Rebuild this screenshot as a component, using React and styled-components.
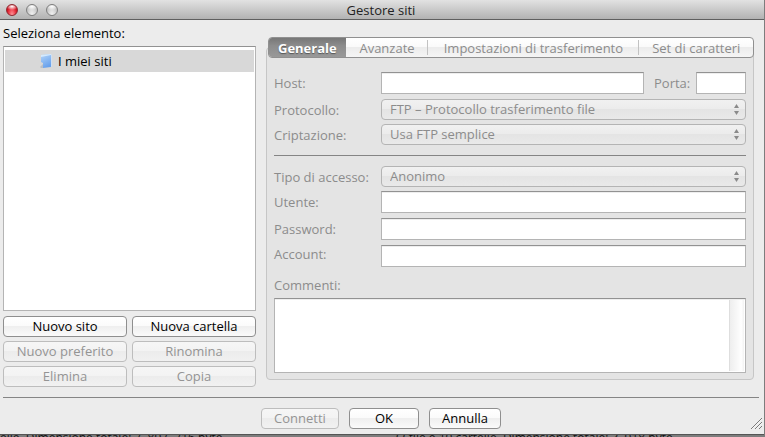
import React from 'react';
import styled, { createGlobalStyle } from 'styled-components';

const GlobalStyle = createGlobalStyle`
  * {
    box-sizing: border-box;
  }

  body {
    margin: 0;
    background: #7d7d7d;
  }

  body, button, input, select, textarea {
    font-family: "Open Sans", "Noto Sans", sans-serif;
    font-size: 13px;
    font-weight: 500;
    line-height: 18px;
  }
`;

const Desktop = styled.div`
  display: flex;
  flex-direction: column;
  height: 100vh;
  min-height: 400px;
  overflow: hidden;
`;

const Window = styled.div`
  display: flex;
  flex-direction: column;
  flex: 1;
  min-height: 0;
  margin-right: 1px;
  background: #ececec;
  border-bottom: 1px solid #555;
`;

const TitleBar = styled.header`
  display: grid;
  grid-template-columns: 1fr auto 1fr;
  align-items: center;
  height: 20px;
  padding: 0 8px 0 6px;
  background: linear-gradient(#e2e2e2, #b2b2b2);
  border-bottom: 1px solid #5f5f5f;
`;

const Title = styled.h1`
  margin: 0;
  font-size: 13px;
  font-weight: 500;
  line-height: 18px;
  color: #222;
`;

const Lights = styled.div`
  display: flex;
  gap: 8px;
`;

const Light = styled.button`
  width: 12px;
  height: 12px;
  padding: 0;
  border: 1px solid ${props => (props.$red ? '#8d2930' : '#7e7e7e')};
  border-radius: 50%;
  background: ${props => (props.$red
    ? 'radial-gradient(ellipse 60% 35% at 50% 15%, #fff, transparent), radial-gradient(ellipse at 50% 100%, #ff9a9e 0, #f04a55 40%, #d2101f 75%)'
    : 'radial-gradient(ellipse 60% 35% at 50% 15%, #fff, transparent), radial-gradient(ellipse at 50% 100%, #f2f2f2 0, #d8d8d8 45%, #c0c0c0 80%)')};
`;

const Main = styled.main`
  display: flex;
  flex: 1;
  gap: 10px;
  min-height: 0;
  padding: 0 10px 10px 3px;
`;

const Sidebar = styled.section`
  display: flex;
  flex-direction: column;
  flex: 0 0 253px;
  padding-top: 4px;
`;

const SidebarTitle = styled.h2`
  margin: 0 0 4px;
  font-size: 13px;
  font-weight: 500;
  line-height: 18px;
  color: #000;
`;

const SiteTree = styled.ul`
  flex: 1;
  min-height: 0;
  margin: 0 0 5px;
  padding: 3px 1px;
  list-style: none;
  background: #fff;
  border: 1px solid #b4b4b4;
  border-top-color: #929292;
`;

const SiteItem = styled.li`
  display: flex;
  align-items: center;
  gap: 5px;
  height: 22px;
  padding-left: 35px;
  color: #000;
  background: #d8d8d8;
`;

const ButtonGrid = styled.div`
  display: grid;
  grid-template-columns: 1fr 1fr;
  gap: 4px 5px;
`;

const Button = styled.button`
  height: 21px;
  width: ${props => props.$width || 'auto'};
  padding: 0 4px 2px;
  color: #000;
  background: linear-gradient(#fff 0, #fbfbfb 45%, #efefef 50%, #fafafa 100%);
  border: 1px solid #8f8f8f;
  border-radius: 4px;

  &:disabled {
    color: #949494;
    background: linear-gradient(#f6f6f6 0, #f3f3f3 45%, #ececec 50%, #f1f1f1 100%);
    border-color: #bdbdbd;
  }
`;

const Settings = styled.section`
  display: flex;
  flex-direction: column;
  flex: 1;
  min-width: 0;
  padding: 17px 0 7px;
`;

const TabBar = styled.div`
  position: relative;
  z-index: 1;
  display: flex;
  height: 21px;
  margin-left: 2px;
  overflow: hidden;
  background: linear-gradient(#fff 0, #fafafa 45%, #ececec 50%, #f5f5f5 100%);
  border: 1px solid #909090;
  border-radius: 4px;
`;

const Tab = styled.button`
  display: flex;
  align-items: center;
  justify-content: center;
  flex: ${props => props.$size} 1 0;
  padding: 0;
  border: 0;
  white-space: nowrap;
  color: ${props => (props.$active ? '#fff' : '#8c8c8c')};
  font-weight: ${props => (props.$active ? 'bold' : '500')};
  text-shadow: ${props => (props.$active ? '0 1px 1px #555' : 'none')};
  background: ${props => (props.$active ? 'linear-gradient(#777, #8c8c8c 40%, #999)' : 'transparent')};

  &:not(:first-child)::before {
    content: '';
    width: 1px;
    height: 15px;
    margin-right: auto;
    background: ${props => (props.$divided ? '#c2c2c2' : 'transparent')};
  }

  &:not(:first-child)::after {
    content: '';
    margin-left: auto;
  }
`;

const Panel = styled.form`
  display: flex;
  flex-direction: column;
  flex: 1;
  min-height: 0;
  margin-top: -11px;
  padding: 24px 7px 6px;
  background: #e4e4e4;
  border: 1px solid #c6c6c6;
  border-radius: 4px;
`;

const Row = styled.div`
  display: flex;
  align-items: ${props => props.$align || 'center'};
  margin-bottom: ${props => props.$gap || '5px'};
`;

const Label = styled.label`
  flex: 0 0 ${props => props.$width || '107px'};
  white-space: nowrap;
  color: #8c8c8c;
`;

const PortLabel = styled(Label)`
  padding-left: 10px;
`;

const TextInput = styled.input`
  flex: ${props => (props.$width ? `0 0 ${props.$width}` : '1')};
  min-width: 0;
  height: 22px;
  padding: 0 4px;
  background: #fff;
  border: 1px solid #b4b4b4;
  border-top-color: #929292;
  border-radius: 0;
  box-shadow: inset 0 1px 0 #eee;
`;

const SelectBox = styled.div`
  position: relative;
  display: flex;
  flex: 1;
  min-width: 0;
`;

const SelectInput = styled.select`
  width: 100%;
  height: 21px;
  padding: 0 20px 2px 8px;
  appearance: none;
  color: #8c8c8c;
  opacity: 1;
  background: linear-gradient(#f1f1f1 0, #ececec 45%, #e4e4e4 50%, #e9e9e9 100%);
  border: 1px solid #b4b4b4;
  border-radius: 4px;
`;

const Arrows = styled.svg`
  position: absolute;
  top: 5px;
  right: 7px;
  pointer-events: none;
`;

const Divider = styled.hr`
  width: 100%;
  height: 1px;
  margin: ${props => props.$margin || '0'};
  border: 0;
  background: #858585;
`;

const CommentBox = styled.div`
  display: flex;
  flex: 1;
  min-height: 40px;
  margin-top: 4px;
  background: #fff;
  border: 1px solid #b4b4b4;
  border-top-color: #929292;
  box-shadow: inset 0 1px 0 #eee;
`;

const CommentInput = styled.textarea`
  flex: 1;
  min-width: 0;
  padding: 2px 4px;
  border: 0;
  resize: none;
  background: transparent;
`;

const ScrollTrack = styled.div`
  width: 15px;
  margin: 1px;
  background: linear-gradient(to right, #eee, #fafafa 60%, #fff 80%, #f2f2f2);
  border-left: 1px solid #dedede;
`;

const SeparatorWrap = styled.div`
  padding: 0 5px 0 3px;
`;

const Footer = styled.footer`
  display: grid;
  grid-template-columns: 1fr auto 1fr;
  padding: 10px 2px 5px 0;
`;

const FooterButtons = styled.div`
  display: flex;
  grid-column: 2;
  gap: 10px;
`;

const Grip = styled.svg`
  justify-self: end;
  align-self: end;
`;

const Backdrop = styled.div`
  display: grid;
  grid-template-columns: 392px 1fr;
  height: 2px;
  overflow: hidden;
  font-size: 12px;
  line-height: 6px;
  white-space: nowrap;
  color: #111;
  background: #7d7d7d;
`;

const FolderIcon = () => (
  <svg width="13" height="16" viewBox="0 0 13 16" aria-hidden="true">
    <defs>
      <linearGradient id="folder" x1="0" y1="0" x2="0.4" y2="1">
        <stop offset="0" stopColor="#b4d5f9" />
        <stop offset="1" stopColor="#6aa2ec" />
      </linearGradient>
    </defs>
    <path d="M0 14l3-3v4H1z" fill="#b9bec6" />
    <path d="M1 2l10-1v13l-8 1v-5L1 9z" fill="url(#folder)" />
    <path d="M1 2l10-1v1L1 4z" fill="#d5eafd" />
    <path d="M11 1l1 1v11l-1 1z" fill="#cfdff2" />
  </svg>
);

const Select = ({ id, value }) => (
  <SelectBox>
    <SelectInput id={id} disabled defaultValue={value}>
      <option value={value}>{value}</option>
    </SelectInput>
    <Arrows width="5" height="11" viewBox="0 0 5 11" aria-hidden="true">
      <path d="M0 4L2.5 0L5 4zM0 7L2.5 11L5 7z" fill="#8a8a8a" />
    </Arrows>
  </SelectBox>
);

const tabs = [
  { name: 'Generale', size: 77 },
  { name: 'Avanzate', size: 82 },
  { name: 'Impostazioni di trasferimento', size: 212 },
  { name: 'Set di caratteri', size: 115 },
];

const siteActions = [
  { name: 'Nuovo sito', enabled: true },
  { name: 'Nuova cartella', enabled: true },
  { name: 'Nuovo preferito' },
  { name: 'Rinomina' },
  { name: 'Elimina' },
  { name: 'Copia' },
];

const App = () => (
  <Desktop>
    <GlobalStyle />
    <Window>
      <TitleBar>
        <Lights>
          <Light $red aria-label="Chiudi" />
          <Light aria-label="Riduci" />
          <Light aria-label="Ingrandisci" />
        </Lights>
        <Title>Gestore siti</Title>
      </TitleBar>
      <Main>
        <Sidebar>
          <SidebarTitle>Seleziona elemento:</SidebarTitle>
          <SiteTree>
            <SiteItem>
              <FolderIcon />
              I miei siti
            </SiteItem>
          </SiteTree>
          <ButtonGrid>
            {siteActions.map(action => (
              <Button key={action.name} disabled={!action.enabled}>{action.name}</Button>
            ))}
          </ButtonGrid>
        </Sidebar>
        <Settings>
          <TabBar role="tablist">
            {tabs.map((tab, i) => (
              <Tab
                key={tab.name}
                type="button"
                role="tab"
                aria-selected={i === 0}
                $size={tab.size}
                $active={i === 0}
                $divided={i > 1}
              >
                {tab.name}
              </Tab>
            ))}
          </TabBar>
          <Panel>
            <Row>
              <Label htmlFor="host">Host:</Label>
              <TextInput id="host" disabled />
              <PortLabel htmlFor="port" $width="52px">Porta:</PortLabel>
              <TextInput id="port" disabled $width="50px" />
            </Row>
            <Row $gap="4px">
              <Label htmlFor="protocol">Protocollo:</Label>
              <Select id="protocol" value="FTP – Protocollo trasferimento file" />
            </Row>
            <Row $gap="0">
              <Label htmlFor="encryption">Criptazione:</Label>
              <Select id="encryption" value="Usa FTP semplice" />
            </Row>
            <Divider $margin="10px 0" />
            <Row $gap="4px">
              <Label htmlFor="logon">Tipo di accesso:</Label>
              <Select id="logon" value="Anonimo" />
            </Row>
            <Row>
              <Label htmlFor="user">Utente:</Label>
              <TextInput id="user" disabled />
            </Row>
            <Row>
              <Label htmlFor="password">Password:</Label>
              <TextInput id="password" type="password" disabled />
            </Row>
            <Row $align="flex-start" $gap="9px">
              <Label htmlFor="account">Account:</Label>
              <TextInput id="account" disabled />
            </Row>
            <Label htmlFor="comments" $width="auto">Commenti:</Label>
            <CommentBox>
              <CommentInput id="comments" disabled />
              <ScrollTrack />
            </CommentBox>
          </Panel>
        </Settings>
      </Main>
      <SeparatorWrap>
        <Divider />
      </SeparatorWrap>
      <Footer>
        <FooterButtons>
          <Button disabled $width="78px">Connetti</Button>
          <Button $width="70px">OK</Button>
          <Button $width="72px">Annulla</Button>
        </FooterButtons>
        <Grip width="11" height="11" viewBox="0 0 11 11" aria-hidden="true">
          <path d="M0 11L11 0M4 11L11 4M8 11L11 8" stroke="#7a7a7a" strokeWidth="1" />
          <path d="M1 11L11 1M5 11L11 5" stroke="#fff" strokeWidth="0.5" />
        </Grip>
      </Footer>
    </Window>
    <Backdrop>
      <span>elle. Dimensione totale: 7. 897. 716 byte</span>
      <span>22 file e 10 cartelle. Dimensione totale: 3. 918 byte</span>
    </Backdrop>
  </Desktop>
);

export default App;
